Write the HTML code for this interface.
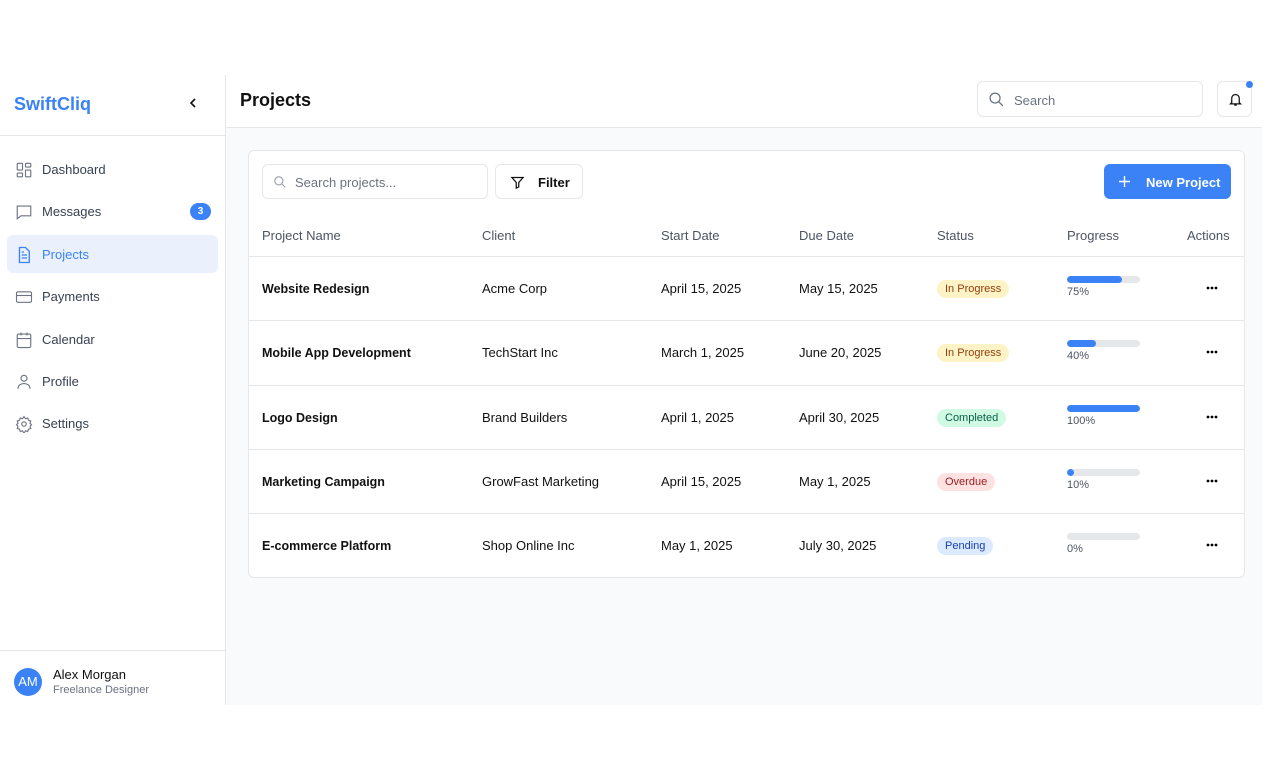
<!DOCTYPE html>
<html><head><style>
*{box-sizing:border-box;margin:0;padding:0}
body{width:1270px;height:760px;background:#fff;font-family:"Liberation Sans",sans-serif;position:relative;overflow:hidden}
.app{position:absolute;left:0;top:75px;width:1262px;height:630px;background:#f9fafb}
.side{position:absolute;left:0;top:0;width:226px;height:630px;background:#fff;border-right:1px solid #e5e7eb}
.logo{height:61px;border-bottom:1px solid #e5e7eb;position:relative}
.logo b{position:absolute;left:14px;top:19px;font-size:18px;color:#3b82f6}
.logo svg{position:absolute;left:188px;top:23px}
.nav{position:absolute;left:7px;width:211px;height:38px;border-radius:6px;font-size:13px;color:#374151}
.nav svg{position:absolute;left:8px;top:11px}
.nav .t{position:absolute;left:35px;top:12px}
.nav.act{background:#eaf1fd;color:#3b82f6}
.badge{position:absolute;right:7px;top:11px;width:21px;height:17px;border-radius:9px;background:#3b82f6;color:#fff;font-size:10px;text-align:center;line-height:17px;font-weight:bold}
.user{position:absolute;left:0;top:575px;width:225px;height:55px;border-top:1px solid #e5e7eb}
.av{position:absolute;left:14px;top:17px;width:28px;height:28px;border-radius:50%;background:#3b82f6;color:#fff;font-size:13px;text-align:center;line-height:28px}
.hdr{position:absolute;left:226px;top:0;width:1036px;height:53px;background:#fff;border-bottom:1px solid #e5e7eb}
.hdr h1{position:absolute;left:14px;top:15px;font-size:18px;color:#111}
.sb{position:absolute;left:751px;top:6px;width:226px;height:36px;border:1px solid #e5e7eb;border-radius:6px;font-size:13px;color:#6b7280}
.bell{position:absolute;left:991px;top:6px;width:35px;height:36px;border:1px solid #e5e7eb;border-radius:6px}
.card{position:absolute;left:248px;top:75px;width:997px;height:428px;background:#fff;border:1px solid #e5e7eb;border-radius:6px}
.inp{position:absolute;border:1px solid #e5e7eb;border-radius:6px;font-size:13px}
.btn{position:absolute;left:855px;top:14px;width:127px;height:35px;background:#3b82f6;border-radius:6px;color:#fff;font-size:13px;font-weight:bold}
.row{position:absolute;left:0;width:995px;height:64px;border-top:1px solid #e5e7eb;font-size:13px;color:#111}
.row>div,.th>div{position:absolute}
.row .b{font-size:12.5px;font-weight:bold;top:25px!important}
.th{position:absolute;left:0;top:77px;width:995px;font-size:13px;color:#4b5563}
.pill{font-size:11px;padding:3px 8px;border-radius:10px}
.bar{width:73px;height:7px;border-radius:4px;background:#e5e7eb;overflow:hidden}
.bar i{display:block;height:7px;background:#3b82f6;border-radius:4px}
.pct{font-size:11px;color:#4b5563;margin-top:3px}
.dots{left:957px;top:29px;width:12px;height:4px}
</style></head><body>
<div class="app">
<div class="side">
<div class="logo"><b>SwiftCliq</b><svg width="10" height="10" viewBox="0 0 10 10" fill="none" stroke="#111" stroke-width="1.6"><path d="M7 1L3 5l4 4"/></svg></div>
<div class="nav" style="top:75px"><svg width="18" height="18" viewBox="0 0 24 24" fill="none" stroke="#6b7280" stroke-width="1.5"><rect x="3" y="3" width="7" height="9" rx="1"/><rect x="14" y="3" width="7" height="5" rx="1"/><rect x="14" y="12" width="7" height="9" rx="1"/><rect x="3" y="16" width="7" height="5" rx="1"/></svg><span class="t">Dashboard</span></div>
<div class="nav" style="top:117px"><svg width="18" height="18" viewBox="0 0 24 24" fill="none" stroke="#6b7280" stroke-width="1.5"><path d="M3 4h18v13H8l-5 4z"/></svg><span class="t">Messages</span><span class="badge">3</span></div>
<div class="nav act" style="top:160px"><svg width="18" height="18" viewBox="0 0 24 24" fill="none" stroke="#3b82f6" stroke-width="1.8"><path d="M6 2h8l5 5v15H6z M9 12h7 M9 16h7 M9 8h3"/></svg><span class="t">Projects</span></div>
<div class="nav" style="top:202px"><svg width="18" height="18" viewBox="0 0 24 24" fill="none" stroke="#6b7280" stroke-width="1.5"><rect x="2" y="5" width="20" height="14" rx="2"/><path d="M2 10h20"/></svg><span class="t">Payments</span></div>
<div class="nav" style="top:245px"><svg width="18" height="18" viewBox="0 0 24 24" fill="none" stroke="#6b7280" stroke-width="1.5"><rect x="3" y="4" width="18" height="18" rx="2"/><path d="M3 10h18M8 2v4M16 2v4"/></svg><span class="t">Calendar</span></div>
<div class="nav" style="top:287px"><svg width="18" height="18" viewBox="0 0 24 24" fill="none" stroke="#6b7280" stroke-width="1.5"><circle cx="12" cy="7" r="4"/><path d="M4 21c0-5 4-7 8-7s8 2 8 7"/></svg><span class="t">Profile</span></div>
<div class="nav" style="top:329px"><svg width="18" height="18" viewBox="0 0 24 24" fill="none" stroke="#6b7280" stroke-width="1.5"><circle cx="12" cy="12" r="3"/><path d="M12 2l2 3 3-1 1 3 3 1-1 3 2 2-2 2 1 3-3 1-1 3-3-1-2 3-2-3-3 1-1-3-3-1 1-3-2-2 2-2-1-3 3-1 1-3 3 1z"/></svg><span class="t">Settings</span></div>
<div class="user"><div class="av">AM</div><div style="position:absolute;left:53px;top:16px;font-size:13px;color:#111">Alex Morgan</div><div style="position:absolute;left:53px;top:33px;font-size:11px;color:#6b7280">Freelance Designer</div></div>
</div>
<div class="hdr"><h1>Projects</h1>
<div class="sb"><svg style="position:absolute;left:10px;top:9px" width="17" height="17" viewBox="0 0 24 24" fill="none" stroke="#6b7280" stroke-width="1.8"><circle cx="10" cy="10" r="7"/><path d="M15 15l6 6"/></svg><span style="position:absolute;left:36px;top:11px">Search</span></div>
<div class="bell"><svg style="position:absolute;left:10px;top:10px" width="15" height="15" viewBox="0 0 24 24" fill="none" stroke="#111" stroke-width="2"><path d="M6 17V10a6 6 0 0 1 12 0v7l2 2H4z M10 21h4"/></svg><div style="position:absolute;left:28px;top:-1px;width:7px;height:7px;border-radius:50%;background:#3b82f6"></div></div>
</div>
<div class="card">
<div class="inp" style="left:13px;top:13px;width:226px;height:35px;color:#6b7280"><svg style="position:absolute;left:10px;top:10px" width="14" height="14" viewBox="0 0 24 24" fill="none" stroke="#9ca3af" stroke-width="2"><circle cx="10" cy="10" r="7"/><path d="M15 15l6 6"/></svg><span style="position:absolute;left:32px;top:10px">Search projects...</span></div>
<div class="inp" style="left:246px;top:13px;width:88px;height:35px;color:#111;font-weight:bold"><svg style="position:absolute;left:14px;top:10px" width="15" height="15" viewBox="0 0 24 24" fill="none" stroke="#111" stroke-width="2"><path d="M3 4h18l-7 8v7l-4 2v-9z"/></svg><span style="position:absolute;left:42px;top:10px">Filter</span></div>
<div class="btn" style="top:13px"><svg style="position:absolute;left:15px;top:12px" width="11" height="11" viewBox="0 0 11 11" stroke="#fff" stroke-width="1.4"><path d="M5.5 0v11M0 5.5h11"/></svg><span style="position:absolute;left:42px;top:11px">New Project</span></div>
<div class="th"><div style="left:13px">Project Name</div><div style="left:233px">Client</div><div style="left:412px">Start Date</div><div style="left:550px">Due Date</div><div style="left:688px">Status</div><div style="left:818px">Progress</div><div style="left:938px">Actions</div></div>
<div class="row" style="top:105px"><div class="b" style="left:13px">Website Redesign</div><div style="left:233px;top:24px">Acme Corp</div><div style="left:412px;top:24px">April 15, 2025</div><div style="left:550px;top:24px">May 15, 2025</div><div class="pill" style="left:688px;top:23px;background:#fef3c7;color:#92400e">In Progress</div><div style="left:818px;top:19px"><div class="bar"><i style="width:75%"></i></div><div class="pct">75%</div></div><svg class="dots" style="position:absolute" viewBox="0 0 12 4"><circle cx="2" cy="2" r="1.4"/><circle cx="6" cy="2" r="1.4"/><circle cx="10" cy="2" r="1.4"/></svg></div>
<div class="row" style="top:169px"><div class="b" style="left:13px">Mobile App Development</div><div style="left:233px;top:24px">TechStart Inc</div><div style="left:412px;top:24px">March 1, 2025</div><div style="left:550px;top:24px">June 20, 2025</div><div class="pill" style="left:688px;top:23px;background:#fef3c7;color:#92400e">In Progress</div><div style="left:818px;top:19px"><div class="bar"><i style="width:40%"></i></div><div class="pct">40%</div></div><svg class="dots" style="position:absolute" viewBox="0 0 12 4"><circle cx="2" cy="2" r="1.4"/><circle cx="6" cy="2" r="1.4"/><circle cx="10" cy="2" r="1.4"/></svg></div>
<div class="row" style="top:234px"><div class="b" style="left:13px">Logo Design</div><div style="left:233px;top:24px">Brand Builders</div><div style="left:412px;top:24px">April 1, 2025</div><div style="left:550px;top:24px">April 30, 2025</div><div class="pill" style="left:688px;top:23px;background:#d1fae5;color:#065f46">Completed</div><div style="left:818px;top:19px"><div class="bar"><i style="width:100%"></i></div><div class="pct">100%</div></div><svg class="dots" style="position:absolute" viewBox="0 0 12 4"><circle cx="2" cy="2" r="1.4"/><circle cx="6" cy="2" r="1.4"/><circle cx="10" cy="2" r="1.4"/></svg></div>
<div class="row" style="top:298px"><div class="b" style="left:13px">Marketing Campaign</div><div style="left:233px;top:24px">GrowFast Marketing</div><div style="left:412px;top:24px">April 15, 2025</div><div style="left:550px;top:24px">May 1, 2025</div><div class="pill" style="left:688px;top:23px;background:#fee2e2;color:#991b1b">Overdue</div><div style="left:818px;top:19px"><div class="bar"><i style="width:10%"></i></div><div class="pct">10%</div></div><svg class="dots" style="position:absolute" viewBox="0 0 12 4"><circle cx="2" cy="2" r="1.4"/><circle cx="6" cy="2" r="1.4"/><circle cx="10" cy="2" r="1.4"/></svg></div>
<div class="row" style="top:362px"><div class="b" style="left:13px">E-commerce Platform</div><div style="left:233px;top:24px">Shop Online Inc</div><div style="left:412px;top:24px">May 1, 2025</div><div style="left:550px;top:24px">July 30, 2025</div><div class="pill" style="left:688px;top:23px;background:#dbeafe;color:#1e40af">Pending</div><div style="left:818px;top:19px"><div class="bar"><i style="width:0"></i></div><div class="pct">0%</div></div><svg class="dots" style="position:absolute" viewBox="0 0 12 4"><circle cx="2" cy="2" r="1.4"/><circle cx="6" cy="2" r="1.4"/><circle cx="10" cy="2" r="1.4"/></svg></div>
</div>
</div>
</body></html>
